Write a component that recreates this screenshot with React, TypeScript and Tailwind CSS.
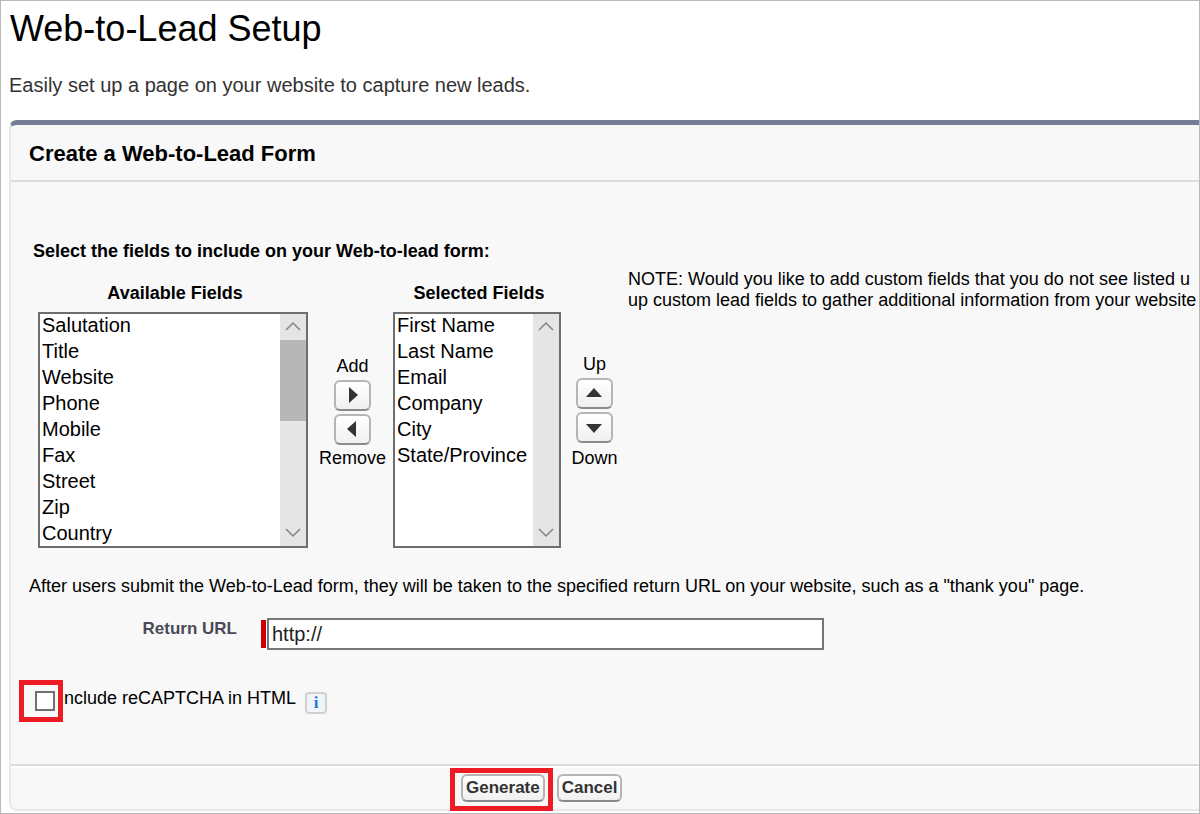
import React from "react";

const availableFields = [
  "Salutation",
  "Title",
  "Website",
  "Phone",
  "Mobile",
  "Fax",
  "Street",
  "Zip",
  "Country",
];

const selectedFields = [
  "First Name",
  "Last Name",
  "Email",
  "Company",
  "City",
  "State/Province",
];

const arrows = {
  right: "M15 7 L24 15 L15 23 Z",
  left: "M22 7 L13 15 L22 23 Z",
  up: "M10 19 L18 10 L26 19 Z",
  down: "M10 12 L18 21 L26 12 Z",
};

const ArrowButton: React.FC<{ dir: keyof typeof arrows; label: string }> = ({ dir, label }) => (
  <button
    type="button"
    aria-label={label}
    className="h-[31px] w-[37px] rounded-md border-2 border-[#b5b5b5] border-b-[#8a8a8a] bg-linear-to-b from-white to-[#f0f0f0]"
  >
    <svg viewBox="2 2 33 27" className="block h-[27px] w-[33px]" fill="#333">
      <path d={arrows[dir]} />
    </svg>
  </button>
);

const Chevron: React.FC<{ d: string }> = ({ d }) => (
  <svg viewBox="0 0 26 26" className="h-[26px] w-[26px]" fill="none" stroke="#858585" strokeWidth="1.5">
    <path d={d} />
  </svg>
);

type ListBoxProps = {
  id: string;
  title: string;
  fields: string[];
  width: string;
  thumb?: boolean;
};

const ListBox: React.FC<ListBoxProps> = ({ id, title, fields, width, thumb }) => (
  <div className="flex flex-col items-center">
    <label htmlFor={id} className="mb-[7px] pl-1 text-[18px] leading-6 font-bold">
      {title}
    </label>
    <div className={`flex h-[236px] border-2 border-[#6e6e6e] bg-white ${width}`}>
      <select
        id={id}
        multiple
        size={9}
        className="h-full min-w-0 flex-1 appearance-none overflow-hidden bg-white text-[20px] leading-[26px] outline-none"
      >
        {fields.map((field) => (
          <option key={field} className="h-[26px] min-h-0 p-0 pl-0.5 leading-[24px]">
            {field}
          </option>
        ))}
      </select>
      <div className="flex w-[26px] shrink-0 flex-col bg-[#e5e5e5]">
        <Chevron d="M6 16 L13 9 L20 16" />
        <div className="flex-1">{thumb && <div className="h-[81px] bg-[#b7b7b7]" />}</div>
        <Chevron d="M6 9 L13 16 L20 9" />
      </div>
    </div>
  </div>
);

const FooterButton: React.FC<{ children: string }> = ({ children }) => (
  <button
    type="button"
    className="h-7 rounded-md border-2 border-[#b5b5b5] border-b-[#8a8a8a] bg-linear-to-b from-white to-[#f0f0f0] px-[3px] text-[17px] leading-6 font-bold text-[#333]"
  >
    {children}
  </button>
);

const App: React.FC = () => {
  return (
    <div className="min-h-screen w-full overflow-hidden border border-[#b9b9b9] bg-white pb-0.5 pl-2 font-['Liberation_Sans',Arial,sans-serif] text-black">
      <h1 className="pt-[5px] pl-px text-[36px] leading-[46px]">Web-to-Lead Setup</h1>
      <p className="mt-5 text-[20px] leading-[26px] text-[#333]">
        Easily set up a page on your website to capture new leads.
      </p>

      <form className="mt-[22px] rounded-l-lg border-t-[5px] border-b-2 border-l-2 border-t-[#747e96] border-b-[#e8e8e8] border-l-[#e8e8e8] bg-[#f8f8f8]">
        <h2 className="border-b-2 border-[#dcdcdc] pt-[13px] pb-2.5 pl-[18px] text-[22px] leading-8 font-bold">
          Create a Web-to-Lead Form
        </h2>

        <div className="pt-[57px] pl-[18px]">
          <h3 className="pl-1 text-[18px] leading-6 font-bold">
            Select the fields to include on your Web-to-lead form:
          </h3>

          <div className="mt-[18px] flex items-start pl-[9px]">
            <ListBox id="available" title="Available Fields" fields={availableFields} width="w-[270px]" thumb />
            <div className="flex w-[85px] shrink-0 flex-col items-center pt-[73px] pl-1 text-[18px] leading-6">
              <span>Add</span>
              <div className="mt-0.5 mb-px flex flex-col gap-[3px]">
                <ArrowButton dir="right" label="Add" />
                <ArrowButton dir="left" label="Remove" />
              </div>
              <span>Remove</span>
            </div>
            <ListBox id="selected" title="Selected Fields" fields={selectedFields} width="w-[168px]" />
            <div className="flex w-[67px] shrink-0 flex-col items-center pt-[71px] text-[18px] leading-6">
              <span>Up</span>
              <div className="mt-0.5 mb-[3px] flex flex-col gap-[3px]">
                <ArrowButton dir="up" label="Up" />
                <ArrowButton dir="down" label="Down" />
              </div>
              <span>Down</span>
            </div>
            <p className="-mt-3 w-0 text-[18px] leading-[21px] whitespace-nowrap">
              NOTE: Would you like to add custom fields that you do not see listed u
              <br />
              up custom lead fields to gather additional information from your website
            </p>
          </div>

          <p className="mt-[26px] text-[18px] leading-6">
            After users submit the Web-to-Lead form, they will be taken to the specified return URL on your website,
            such as a "thank you" page.
          </p>

          <div className="mt-5 flex items-center">
            <label htmlFor="return-url" className="w-[208px] pb-2.5 text-right text-[17px] leading-5 font-bold text-[#4a4a56]">
              Return URL
            </label>
            <div className="ml-6 h-7 w-[5px] bg-[#c00]" />
            <input
              id="return-url"
              type="text"
              defaultValue="http://"
              className="ml-px h-8 w-[557px] border-2 border-[#767676] bg-white px-[3px] text-[20px] text-[#222] outline-none"
            />
          </div>

          <div className="mt-9 flex items-end pb-[50px] pl-1.5">
            <div className="relative flex pb-[3px]">
              <input
                id="recaptcha"
                type="checkbox"
                className="h-5 w-5 appearance-none border-2 border-[#707070] bg-white"
              />
              <span className="pointer-events-none absolute -top-[11px] -left-4 h-[42px] w-11 border-5 border-[#ed1c24]" />
            </div>
            <label htmlFor="recaptcha" className="pb-1 pl-1 text-[18px] leading-6">
              Include reCAPTCHA in HTML
            </label>
            <button
              type="button"
              aria-label="Info"
              className="ml-[9px] h-[22px] w-[22px] rounded border-2 border-[#d0d0d0] bg-[#f0f5fa] font-['Liberation_Serif',serif] text-[17px] leading-[18px] font-bold text-[#1f78d1]"
            >
              i
            </button>
          </div>
        </div>

        <div className="flex gap-3 border-t-2 border-[#dcdcdc] pt-2 pb-[7px] pl-[450px] shadow-[inset_0_2px_0_white]">
          <div className="relative flex">
            <FooterButton>Generate</FooterButton>
            <span className="pointer-events-none absolute -top-1.5 -right-2 -bottom-[9px] -left-[11px] border-5 border-[#ed1c24]" />
          </div>
          <FooterButton>Cancel</FooterButton>
        </div>
      </form>
    </div>
  );
};

export default App;
